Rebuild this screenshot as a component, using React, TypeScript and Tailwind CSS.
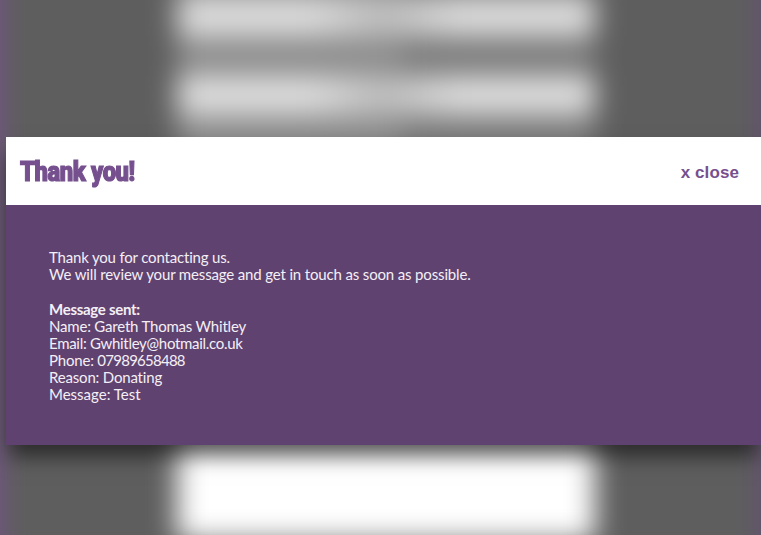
import React from 'react';

function Field() {
  return (
    <div className="flex h-[39px] w-full bg-[#dedede]">
      <div className="w-[132px]" />
      <div className="w-[150px] bg-linear-to-r from-[#dedede] via-[#bebebe] to-[#dedede]" />
    </div>
  );
}

function Label() {
  return (
    <div className="flex h-10 w-full bg-[#7c7c7c]">
      <div className="w-[225px] bg-[#8d8d8d]" />
    </div>
  );
}

function PageBehind() {
  return (
    <div className="absolute -left-10 -top-[82px] h-[720px] w-[841px] bg-[#5e5e5e] blur-[14px]">
      <div className="flex h-full justify-between">
        <div className="w-[41px] bg-[#755289]" />
        <div className="ml-[10px] flex w-[418px] flex-col">
          <Field />
          <Label />
          <Field />
          <Label />
          <Field />
          <Label />
          <div className="mt-[283px] h-[103px] bg-white" />
        </div>
        <div className="w-[41px] bg-[#654e75]" />
      </div>
    </div>
  );
}

export default function App() {
  return (
    <div className="relative h-[535px] w-[761px] overflow-hidden bg-[#5e5e5e] pl-[6px] pt-[137px]">
      <PageBehind />
      <section className="relative h-[308px] w-[755px] bg-[#604270] shadow-[0_14px_20px_-3px_rgba(0,0,0,0.56)]">
        <header className="flex h-[68px] items-center justify-between bg-white pl-[14px] pr-[22px] text-[#76508e]">
          <h1 className="origin-left scale-x-[0.85] whitespace-nowrap pt-[2px] font-['Roboto',sans-serif] text-[28px] font-black tracking-[-0.5px] [-webkit-text-stroke:1.2px_#76508e]">
            Thank you!
          </h1>
          <button className="pt-[3px] font-['Liberation_Sans',sans-serif] text-[17px] font-bold leading-5 tracking-[0.1px]">
            x close
          </button>
        </header>
        <div className="whitespace-nowrap pl-[43px] pt-[44px] font-['Lato',sans-serif] text-[15px] leading-[17px] text-[#f4eff6] [font-variant-ligatures:none]">
          <p className="tracking-[-0.18px]">Thank you for contacting us.</p>
          <p className="tracking-[-0.15px]">We will review your message and get in touch as soon as possible.</p>
          <p className="mt-[18px] font-bold tracking-[-0.28px]">Message sent:</p>
          <p className="tracking-[-0.2px]">Name: Gareth Thomas Whitley</p>
          <p className="tracking-[-0.29px]">Email: Gwhitley@hotmail.co.uk</p>
          <p className="tracking-[-0.2px]">
            Phone: <span className="tracking-[-0.75px]">07989658488</span>
          </p>
          <p className="tracking-[-0.18px]">Reason: Donating</p>
          <p>Message: Test</p>
        </div>
      </section>
    </div>
  );
}
